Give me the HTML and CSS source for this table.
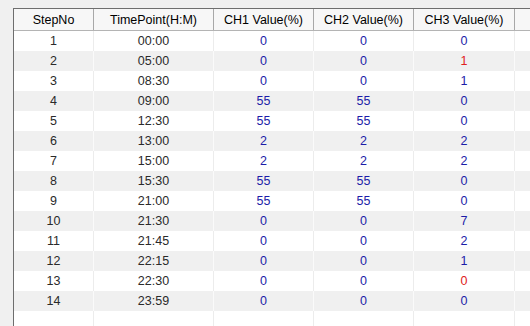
FILE: index.html
```html
<!DOCTYPE html>
<html>
<head>
<meta charset="utf-8">
<link rel="stylesheet" href="styles.css">
</head>
<body>
<div class="grid">
  <div class="row head">
    <div class="c c1">StepNo</div>
    <div class="c c2">TimePoint(H:M)</div>
    <div class="c c3">CH1 Value(%)</div>
    <div class="c c4">CH2 Value(%)</div>
    <div class="c c5">CH3 Value(%)</div>
    <div class="c fill"></div>
  </div>
  <div class="body">
    <div class="row"><div class="c c1">1</div><div class="c c2">00:00</div><div class="c c3 v">0</div><div class="c c4 v">0</div><div class="c c5 v">0</div><div class="c fill"></div></div>
    <div class="row"><div class="c c1">2</div><div class="c c2">05:00</div><div class="c c3 v">0</div><div class="c c4 v">0</div><div class="c c5 r">1</div><div class="c fill"></div></div>
    <div class="row"><div class="c c1">3</div><div class="c c2">08:30</div><div class="c c3 v">0</div><div class="c c4 v">0</div><div class="c c5 v">1</div><div class="c fill"></div></div>
    <div class="row"><div class="c c1">4</div><div class="c c2">09:00</div><div class="c c3 v">55</div><div class="c c4 v">55</div><div class="c c5 v">0</div><div class="c fill"></div></div>
    <div class="row"><div class="c c1">5</div><div class="c c2">12:30</div><div class="c c3 v">55</div><div class="c c4 v">55</div><div class="c c5 v">0</div><div class="c fill"></div></div>
    <div class="row"><div class="c c1">6</div><div class="c c2">13:00</div><div class="c c3 v">2</div><div class="c c4 v">2</div><div class="c c5 v">2</div><div class="c fill"></div></div>
    <div class="row"><div class="c c1">7</div><div class="c c2">15:00</div><div class="c c3 v">2</div><div class="c c4 v">2</div><div class="c c5 v">2</div><div class="c fill"></div></div>
    <div class="row"><div class="c c1">8</div><div class="c c2">15:30</div><div class="c c3 v">55</div><div class="c c4 v">55</div><div class="c c5 v">0</div><div class="c fill"></div></div>
    <div class="row"><div class="c c1">9</div><div class="c c2">21:00</div><div class="c c3 v">55</div><div class="c c4 v">55</div><div class="c c5 v">0</div><div class="c fill"></div></div>
    <div class="row"><div class="c c1">10</div><div class="c c2">21:30</div><div class="c c3 v">0</div><div class="c c4 v">0</div><div class="c c5 v">7</div><div class="c fill"></div></div>
    <div class="row"><div class="c c1">11</div><div class="c c2">21:45</div><div class="c c3 v">0</div><div class="c c4 v">0</div><div class="c c5 v">2</div><div class="c fill"></div></div>
    <div class="row"><div class="c c1">12</div><div class="c c2">22:15</div><div class="c c3 v">0</div><div class="c c4 v">0</div><div class="c c5 v">1</div><div class="c fill"></div></div>
    <div class="row"><div class="c c1">13</div><div class="c c2">22:30</div><div class="c c3 v">0</div><div class="c c4 v">0</div><div class="c c5 r">0</div><div class="c fill"></div></div>
    <div class="row"><div class="c c1">14</div><div class="c c2">23:59</div><div class="c c3 v">0</div><div class="c c4 v">0</div><div class="c c5 v">0</div><div class="c fill"></div></div>
    <div class="row blank"><div class="c c1"></div><div class="c c2"></div><div class="c c3"></div><div class="c c4"></div><div class="c c5"></div><div class="c fill"></div></div>
  </div>
</div>
</body>
</html>
```

FILE: styles.css
```css
html, body {
  margin: 0;
  height: 100%;
}
body {
  background: #f0f0f0;
  padding: 8px 0 0 13px;
  box-sizing: border-box;
  font-family: "Liberation Sans", Arial, sans-serif;
  font-size: 12.5px;
  color: #2a2a2a;
  overflow: hidden;
}
.grid {
  height: 100%;
  display: flex;
  flex-direction: column;
  border-top: 1px solid #6e6e6e;
  border-left: 1px solid #6e6e6e;
  background: #fff;
}
.row {
  display: flex;
  height: 20px;
  flex: none;
}
.c {
  box-sizing: border-box;
  display: flex;
  align-items: center;
  justify-content: center;
  border-right: 1px solid #ececec;
  white-space: nowrap;
}
.c1 { width: 80px; }
.c2 { width: 120px; }
.c3 { width: 100px; }
.c4 { width: 100px; }
.c5 { width: 101px; }
.fill { flex: 1; border-right: none; }
.head {
  height: 21px;
  background: #f7f7f7;
  border-bottom: 1px solid #b4b4b4;
  color: #000;
}
.head .c { border-right: 1px solid #a8a8a8; padding-top: 1px; }
.head .fill { border-right: none; }
.body {
  flex: 1;
  display: flex;
  flex-direction: column;
}
.body .row:nth-child(even) { background: #f0f0f0; }
.body .row:nth-child(even) .c { border-right-color: #fafafa; }
.body .row .fill { border-right: none; }
.blank { flex: 1; height: auto; }
.v { color: #1c1ca8; }
.r { color: #e02020; }
```
